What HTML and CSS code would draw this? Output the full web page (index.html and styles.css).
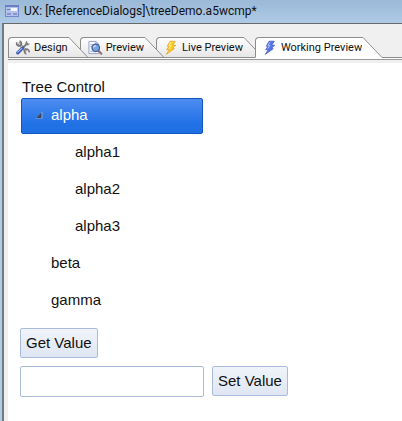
FILE: index.html
```html
<!DOCTYPE html>
<html lang="en">
<head>
<meta charset="utf-8">
<title>UX: [ReferenceDialogs]\treeDemo.a5wcmp*</title>
<link rel="stylesheet" href="styles.css">
</head>
<body>
<header class="titlebar">
  <svg class="title-icon" width="14" height="12" viewBox="0 0 14 12" aria-hidden="true">
    <rect x="0" y="0" width="14" height="12" fill="#7487c8"/>
    <rect x="0" y="0" width="14" height="2" fill="#6a7fc4"/>
    <rect x="1" y="2" width="12" height="9" fill="#b4c2ea"/>
    <rect x="2" y="4" width="3" height="1" fill="#6478bd"/>
    <rect x="6" y="3" width="6" height="3" fill="#f4f7ff"/>
    <rect x="2" y="8" width="4" height="2" fill="#8496cf"/>
    <rect x="8" y="8" width="4" height="2" fill="#8496cf"/>
  </svg>
  <h1 class="title">UX: [ReferenceDialogs]\treeDemo.a5wcmp*</h1>
</header>
<div class="window">
  <nav class="tabs" role="tablist">
    <button class="tab tab-first" role="tab" type="button">
      <svg class="tab-icon" viewBox="0 0 16 16" aria-hidden="true">
        <path d="M3 3.2 11.5 12" stroke="#777" stroke-width="3"/>
        <path d="M3 3.2 11.5 12" stroke="#d6d6d6" stroke-width="1.4"/>
        <path d="M1.4 2.6A2.6 2.6 0 1 0 4.4 1.2M14.3 13.2a2.5 2.5 0 1 0-2.6 1.5" fill="none" stroke="#777" stroke-width="1.7"/>
        <path d="M8 8 13 3" stroke="#777" stroke-width="2"/>
        <path d="M12 1.4 11 4l1.4 1.2L15 4" fill="none" stroke="#858585" stroke-width="1.4"/>
        <path d="M2.4 13.7 7.4 8.7" stroke="#3456ad" stroke-width="3.4" stroke-linecap="round"/>
        <path d="M2.3 13.2 6.8 8.8" stroke="#9bb5f4" stroke-width="1.2" stroke-linecap="round"/>
      </svg>
      <span>Design</span>
      <svg class="tab-cap" viewBox="0 0 20 21" aria-hidden="true">
        <defs><linearGradient id="tab-shade" x1="0" y1="0" x2="0" y2="1"><stop stop-color="#fff"/><stop offset="1" stop-color="#e6e6e6"/></linearGradient></defs>
        <path class="cap-fill" d="M0 0H1L20 20V21H0Z"/><path class="cap-line" d="M0 .5H1L20 20.5H0"/>
      </svg>
    </button>
    <button class="tab tab-second" role="tab" type="button">
      <svg class="tab-icon" viewBox="0 0 16 16" aria-hidden="true">
        <path d="M1.5 1.5H9l3 3v10H1.5Z" fill="#f5f8ff" stroke="#8f9fca"/>
        <path d="M9 1.5v3h3M3 5h3M3 7h2M3 12h4" fill="none" stroke="#93a6d6"/>
        <path d="m11.7 11.4 3 3.3" stroke="#94716a" stroke-width="2.3" stroke-linecap="round"/>
        <circle cx="8.8" cy="8.3" r="4" fill="#75a5e6" stroke="#4c5c86" stroke-width="1.3"/>
        <path d="M6.5 8a2.4 2.4 0 0 1 2.3-2" fill="none" stroke="#e3f2ff" stroke-width="1.3"/>
      </svg>
      <span>Preview</span>
      <svg class="tab-cap" viewBox="0 0 20 21" aria-hidden="true"><path class="cap-fill" d="M0 0H1L20 20V21H0Z"/><path class="cap-line" d="M0 .5H1L20 20.5H0"/></svg>
    </button>
    <button class="tab tab-third" role="tab" type="button">
      <svg class="tab-icon" viewBox="0 0 16 16" aria-hidden="true">
        <path d="M7 1.3h5.5L9.8 5.5H13L9.3 9.2h2.2L3 15.3l3.2-5.1H3.4L6 6.6H4Z" fill="#ffd027" stroke="#e39c24" stroke-width=".8"/>
        <path d="M8 2.3 5.8 5.8h2L5.5 9.2" fill="none" stroke="#fff3a0" stroke-width="1"/>
      </svg>
      <span>Live Preview</span>
      <svg class="tab-cap" viewBox="0 0 20 21" aria-hidden="true"><path class="cap-fill" d="M0 0H1L20 20V21H0Z"/><path class="cap-line" d="M0 .5H1L20 20.5H0"/></svg>
    </button>
    <button class="tab tab-active" role="tab" type="button" aria-selected="true">
      <svg class="tab-icon" viewBox="0 0 16 16" aria-hidden="true">
        <path d="M7 1.3h5.5L9.8 5.5H13L9.3 9.2h2.2L3 15.3l3.2-5.1H3.4L6 6.6H4Z" fill="#5576ec" stroke="#4259b8" stroke-width=".8"/>
        <path d="M8 2.3 5.8 5.8h2L5.5 9.2" fill="none" stroke="#b2c5ff" stroke-width="1"/>
      </svg>
      <span>Working Preview</span>
      <svg class="tab-cap" viewBox="0 0 20 21" aria-hidden="true"><path class="cap-fill" d="M0 0H1L20 20V21H0Z"/><path class="cap-line" d="M0 .5H1L20 20.5"/></svg>
    </button>
    <span class="tabs-rest"></span>
  </nav>
  <div class="tabs-base"></div>
  <main class="panel">
    <h2 class="tree-title" id="tree-title">Tree Control</h2>
    <ul class="tree" role="tree" aria-labelledby="tree-title">
      <li role="treeitem" aria-expanded="true" aria-selected="true">
        <div class="row row-selected">
          <svg class="toggle" viewBox="0 0 8 8" aria-hidden="true"><path d="M7.5 .5v7h-7Z" fill="#8fa9d4"/><path d="M6 2.5V6.5H2Z" fill="#39465c" stroke="#39465c"/></svg>
          <span>alpha</span>
        </div>
        <ul class="branch" role="group">
          <li class="row" role="treeitem">alpha1</li>
          <li class="row" role="treeitem">alpha2</li>
          <li class="row" role="treeitem">alpha3</li>
        </ul>
      </li>
      <li class="row" role="treeitem">beta</li>
      <li class="row" role="treeitem">gamma</li>
    </ul>
    <div class="actions">
      <button class="button" type="button">Get Value</button>
    </div>
    <div class="actions">
      <input class="field" type="text" aria-label="Value">
      <button class="button" type="button">Set Value</button>
    </div>
  </main>
</div>
</body>
</html>
```
FILE: styles.css
```css
* {
  box-sizing: border-box;
}

body {
  display: flex;
  flex-direction: column;
  min-height: 100vh;
  margin: 0;
  background: #b0cce8;
  color: #111;
  font-family: "Liberation Sans", Arial, sans-serif;
  font-size: 15px;
}

.titlebar {
  display: flex;
  align-items: center;
  gap: 5px;
  height: 23px;
  padding: 0 5px 2px;
  background: linear-gradient(#9bb9d8, #aecae6);
}

.title {
  margin: 0;
  font: 12px/20px Roboto, "Open Sans", sans-serif;
  white-space: nowrap;
}

.window {
  display: flex;
  flex: 1;
  flex-direction: column;
  margin-left: 2px;
  padding: 13px 0 0 4px;
  border-top: 1px solid #686868;
  border-left: 2px solid #777b7d;
  background: #f0f0f0;
}

.tabs {
  display: flex;
  isolation: isolate;
}

.tab {
  display: flex;
  position: relative;
  flex: none;
  align-items: center;
  height: 21px;
  margin: 0 0 0 -8px;
  padding: 0;
  border: 0;
  background: none;
  color: #111;
  font: 11px/19px Roboto, "Open Sans", sans-serif;
  white-space: nowrap;
}

.tab span {
  height: 21px;
  border-top: 1px solid #8c8c8c;
  border-bottom: 1px solid #8c8c8c;
  background: linear-gradient(#fff, #e6e6e6);
}

.tab-first {
  z-index: 3;
  margin-left: 0;
}

.tab-second {
  z-index: 2;
}

.tab-third {
  z-index: 1;
}

.tab-icon {
  width: 26px;
  height: 21px;
  padding: 2px 3px 2px 6px;
  border: 1px solid #8c8c8c;
  border-right: 0;
  border-top-left-radius: 4px;
  background: linear-gradient(#fff, #e6e6e6);
}

.tab-cap {
  width: 20px;
  height: 21px;
}

.cap-fill {
  fill: url(#tab-shade);
}

.cap-line {
  fill: none;
  stroke: #8c8c8c;
}

.tab-active {
  z-index: 4;
}

.tab-active span,
.tab-active .tab-icon {
  border-bottom-color: #fff;
  background: #fff;
}

.tab-active .cap-fill {
  fill: #fff;
}

.tabs-rest {
  flex: 1;
  border-bottom: 1px solid #8c8c8c;
}

.tabs-base {
  height: 5px;
  border-top: 1px solid #fff;
  background: linear-gradient(#999 1px, #f0f0f0 1px);
}

.panel {
  flex: 1;
  padding: 15px 12px;
  background: #fff;
}

.tree-title {
  margin: 0 2px 2px;
  font-size: 15px;
  font-weight: 400;
  line-height: 18px;
}

.tree {
  width: 50%;
  max-width: 182px;
  margin: 0 1px 9px;
  padding: 0;
  list-style: none;
}

.branch {
  padding: 0 0 0 24px;
  list-style: none;
}

.row {
  height: 36px;
  margin-bottom: 1px;
  padding: 0 0 2px 30px;
  line-height: 34px;
}

.row-selected {
  display: flex;
  align-items: center;
  gap: 8px;
  padding-left: 13px;
  border: 1px solid #1257bd;
  border-radius: 2px;
  background: linear-gradient(#4e8df0, #2272e6 70%, #1f6fe5);
  color: #fff;
}

.toggle {
  width: 8px;
  height: 8px;
}

.actions {
  display: flex;
  gap: 8px;
  margin-bottom: 8px;
}

.button {
  height: 30px;
  padding: 0 5px 2px;
  border: 1px solid #a9bcdc;
  border-radius: 2px;
  background: linear-gradient(#f0f4fa, #dfe6f2);
  color: #111;
  font: inherit;
}

.field {
  width: 50%;
  max-width: 184px;
  height: 31px;
  padding: 0 5px;
  border: 1px solid #a9bcdc;
  border-radius: 2px;
  background: #fff;
  font: inherit;
}
```
